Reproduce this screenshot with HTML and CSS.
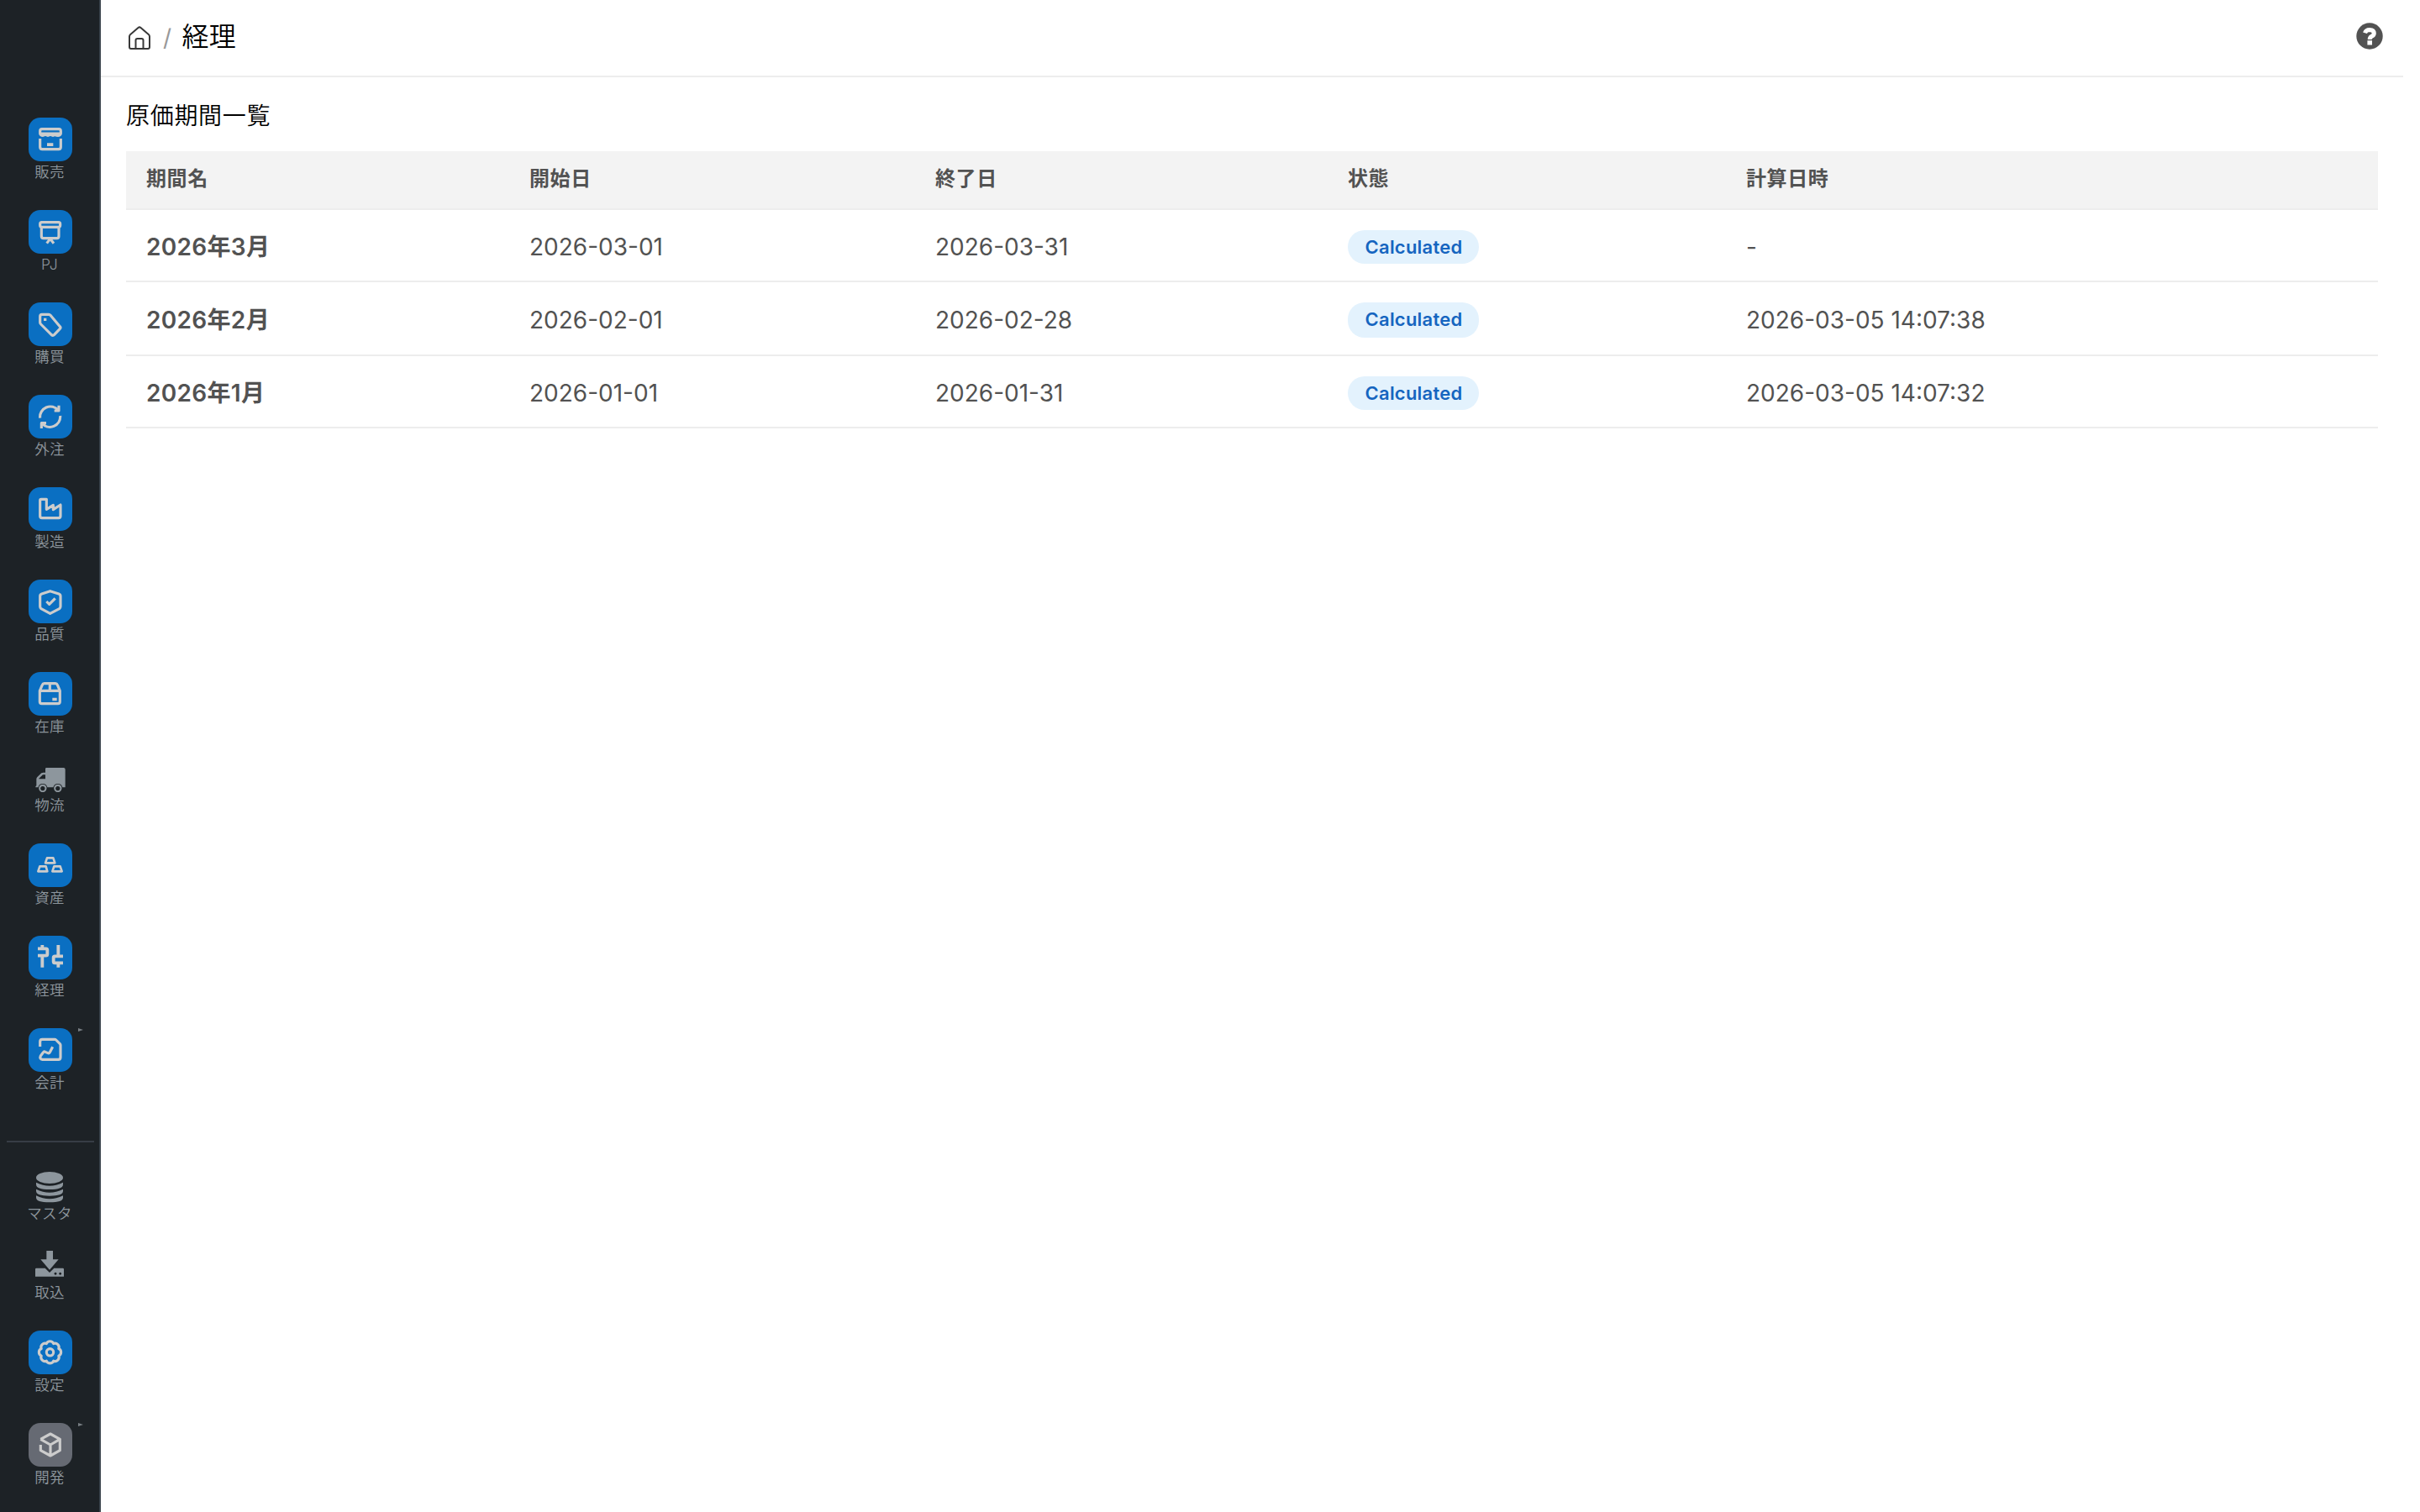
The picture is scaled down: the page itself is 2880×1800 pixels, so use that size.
FILE: index.html
```html
<!DOCTYPE html>
<html lang="ja">
<head>
<meta charset="utf-8">
<title>経理</title>
<link rel="stylesheet" href="styles.css">
</head>
<body>
<div class="app">
  <nav class="sidebar">
    <a class="item"><svg class="tile" viewBox="0 0 156 156"><path d="M41 57V48q0-7 7-7h60q7 0 7 7v9q-2 7-10 7t-9-4q-4 4-9 4t-9-4q-4 4-9 4t-9-4q-4 4-9 4-8 0-10-7ZM41 57H115M41 75V105q0 8 8 8h58q8 0 8-8V75"/><path class="solid" d="M66 91h22v11H66z"/></svg><span class="label">販売</span></a>
    <a class="item"><svg class="tile" viewBox="0 0 156 156"><rect x="41" y="44" width="72" height="17" rx="6"/><path d="M46 63V94q0 7 7 7h48q7 0 7-7V63M77 103L65 119M77 103L90 119"/></svg><span class="label">PJ</span></a>
    <a class="item"><svg class="tile" viewBox="0 0 156 156"><path d="M48 43H72q4 0 6 3L112 86q4 4 0 8L92 115q-5 5-10 1L44 78q-3-3-3-6V50q0-7 7-7Z"/><path class="solid" d="M54 56h10v10H54z"/></svg><span class="label">購買</span></a>
    <a class="item"><svg class="tile" viewBox="0 0 156 156"><path d="M41 83A37 37 0 0 1 106 55M108 38V57H92M113 75A37 37 0 0 1 48 102M46 120V101H63"/></svg><span class="label">外注</span></a>
    <a class="item"><svg class="tile" viewBox="0 0 156 156"><path d="M45 43H64V79L88 64V80L114 63V103q0 7-7 7H48q-7 0-7-7V47q0-4 4-4Z"/></svg><span class="label">製造</span></a>
    <a class="item"><svg class="tile" viewBox="0 0 156 156"><path d="M77 41L108 51q6 2 6 8V96q0 5-4 8L77 121L45 104q-4-3-4-8V59q0-6 6-8Z"/><path d="M64 78L74 88L95 67"/></svg><span class="label">品質</span></a>
    <a class="item"><svg class="tile" viewBox="0 0 156 156"><path d="M40 67L49 46q2-5 7-5H96q5 0 7 5L112 67V106q0 7-7 7H47q-7 0-7-7ZM40 67H112M76 41V67"/><path class="solid" d="M85 92h16v11H85z"/></svg><span class="label">在庫</span></a>
    <a class="item"><svg class="glyph truck" viewBox="0 0 108 90"><path fill-rule="evenodd" d="M40 0H101Q107 0 107 6V70H97A17 17 0 0 0 64 70H43A17 17 0 0 0 10 70H1Q0 66 4 64V40Q4 36 8 32L22 19Q25 17 29 17H36V4Q36 0 40 0ZM27 25L13 38V40H36V25Z"/><path fill-rule="evenodd" d="M26.500 59a14 14 0 1 0 .1 0ZM26.500 66a8 8 0 1 1-.1 0ZM80.500 59a14 14 0 1 0 .1 0ZM80.500 66a8 8 0 1 1-.1 0Z"/></svg><span class="label">物流</span></a>
    <a class="item"><svg class="tile thin" viewBox="0 0 156 156"><path d="M66 52H88L94 70H60ZM40 82H62L67 100H34ZM91 82H113L119 100H85Z"/></svg><span class="label">資産</span></a>
    <a class="item"><svg class="tile bold" viewBox="0 0 156 156"><path d="M49 33V46M33 46H62q5 0 5 5V66q0 5-5 5H33M49 71V113M106 33V73M123 73H94q-5 0-5 5V92q0 5 5 5H123M106 97V113"/></svg><span class="label">経理</span></a>
    <a class="item"><svg class="tile" viewBox="0 0 156 156"><path d="M41 66V48q0-8 8-8H93q3 0 5 2L112 56q2 2 2 5V104q0 8-8 8H50q-12-2-7-13L52 87q3-5 8-2l9 4q4 2 7-3L86 67"/></svg><span class="label">会計</span><i class="more"></i></a>
    <hr class="rule">
    <a class="item"><svg class="glyph" viewBox="0 0 108 108"><path d="M6 18a48 21 0 0 1 96 0a48 21 0 0 1-96 0ZM6 35q48 24 96 0v7q0 18-48 18T6 42ZM6 59q48 24 96 0v7q0 17-48 17T6 66ZM6 82q48 24 96 0v7q0 17-48 17T6 89Z"/></svg><span class="label">マスタ</span></a>
    <a class="item"><svg class="glyph" viewBox="0 0 108 108"><path fill-rule="evenodd" d="M43 -3H66V28H86L54 65L22 28H43ZM7 59H38L54 75L70 59H101Q105 59 105 63V89H3V63Q3 59 7 59ZM75 74a4.500 4.500 0 1 0 .1 0ZM92 74a4.500 4.500 0 1 0 .1 0Z"/></svg><span class="label">取込</span></a>
    <a class="item"><svg class="tile" viewBox="0 0 156 156"><circle cx="76.500" cy="77.500" r="12.500"/><path d="M63.700 46.500a14 14 0 0 1 25.600 0a14 14 0 0 1 18.200 18.200a14 14 0 0 1 0 25.600a14 14 0 0 1-18.200 18.200a14 14 0 0 1-25.600 0a14 14 0 0 1-18.200-18.200a14 14 0 0 1 0-25.600a14 14 0 0 1 18.200-18.200Z"/></svg><span class="label">設定</span></a>
    <a class="item"><svg class="tile gray" viewBox="0 0 156 156"><path d="M43 58L78 39L112 58V98L78 117L43 98V78M43 58L78 78L112 58M78 78V117"/></svg><span class="label">開発</span><i class="more"></i></a>
  </nav>
  <div class="page">
    <header class="topbar">
      <svg class="home" viewBox="0 0 28 30"><path d="M2 13.500Q2 12 3.200 11L12.500 3Q14 1.800 15.500 3L24.800 11Q26 12 26 13.500V26Q26 28 24 28H4Q2 28 2 26ZM9.500 28V18Q9.500 16 11.500 16H16.500Q18.500 16 18.500 18V28"/></svg>
      <span class="slash">/</span>
      <h1 class="crumb">経理</h1>
      <svg class="help" viewBox="0 0 32 32"><circle cx="16" cy="16" r="15.700"/><path class="hook" d="M10.500 12.200Q11.700 8.400 16 8.400Q21.200 8.600 21.300 12.600Q21.200 15 18.500 16.300Q16.200 17.500 16.200 20"/><rect x="13.400" y="21.200" width="5.600" height="5.300"/></svg>
    </header>
    <main class="content">
      <h2 class="title">原価期間一覧</h2>
      <div class="table">
        <div class="row head"><span>期間名</span><span>開始日</span><span>終了日</span><span>状態</span><span>計算日時</span></div>
        <div class="row"><b>2026年3月</b><span>2026-03-01</span><span>2026-03-31</span><span><em class="badge">Calculated</em></span><span>-</span></div>
        <div class="row tall"><b>2026年2月</b><span>2026-02-01</span><span>2026-02-28</span><span><em class="badge">Calculated</em></span><span>2026-03-05 14:07:38</span></div>
        <div class="row"><b>2026年1月</b><span>2026-01-01</span><span>2026-01-31</span><span><em class="badge">Calculated</em></span><span>2026-03-05 14:07:32</span></div>
      </div>
    </main>
  </div>
</div>
</body>
</html>
```
FILE: styles.css
```css
* { box-sizing: border-box; }
body { margin: 0; background: #fff; color: #171717; font-family: Inter, "Noto Sans CJK JP", sans-serif; letter-spacing: 0.02em; }
.app { display: flex; height: 1800px; }

.sidebar { width: 120px; flex: none; display: flex; flex-direction: column; padding-top: 140px; background: #1d2226; border-right: 2px solid #3a434b; }
.item { position: relative; display: flex; flex-direction: column; align-items: center; height: 110px; flex: none; }
.item:has(.glyph) { height: 94px; }
.tile { width: 52px; height: 52px; margin-left: 2px; border-radius: 14px; background: #0a6fc2; fill: none; stroke: #ccc; stroke-width: 9.500; stroke-linejoin: round; }
.tile .solid { fill: #ccc; stroke: none; }
.tile.thin { stroke-width: 8; }
.tile.bold { stroke-width: 11.500; }
.tile.gray { background: #666a73; }
.glyph { width: 36px; height: 36px; fill: #8d969d; overflow: visible; }
.truck { height: 30px; margin: 4px 0 2px 2px; }
.label { height: 26px; line-height: 26px; font-size: 17.500px; font-weight: 350; color: #8d969d; white-space: nowrap; }
.more { position: absolute; left: 93px; top: 0; border-left: 6px solid #777d82; border-top: 2.500px solid transparent; border-bottom: 2.500px solid transparent; }
.rule { width: 104px; height: 2px; margin: 24px 0 36px 8px; border: 0; flex: none; background: #373d45; }

.page { width: 2740px; }
.topbar { display: flex; align-items: center; height: 92px; padding: 0 24px 4px 32px; border-bottom: 2px solid #ededed; }
.home { width: 28px; height: 30px; margin-top: 4px; fill: none; stroke: #383838; stroke-width: 2; stroke-linejoin: round; }
.slash { margin: 4px 0 0 14px; font-size: 28px; color: #999; }
.crumb { margin: 0 0 4px 12px; font-size: 32px; font-weight: 350; color: #000; }
.help { width: 32px; height: 32px; margin-left: auto; fill: #525252; }
.help .hook { fill: none; stroke: #fff; stroke-width: 5; }
.help rect { fill: #fff; }

.content { padding: 26px 30px; }
.title { margin: 0 0 22px; font-size: 28px; line-height: 40px; font-weight: 350; letter-spacing: 0.025em; color: #000; }
.table { width: 2680px; color: #525252; font-size: 28px; }
.row { display: grid; grid-template-columns: 456px 483px 491px 474px 1fr; align-items: center; height: 86px; border-bottom: 2px solid #ededed; }
.row > * { padding-left: 24px; }
.row > span { padding-top: 4px; letter-spacing: 0; }
.row.tall { height: 88px; }
.row.head { height: 70px; background: #f3f3f3; font-size: 24px; font-weight: 700; }
.row.head > span { padding: 0 0 7px 24px; letter-spacing: 0.025em; }
.row b { font-weight: 600; }
.badge { display: block; width: 156px; height: 40px; padding-left: 1px; border-radius: 20px; background: #e3f2fd; color: #1565c0; font-size: 22px; line-height: 40px; font-style: normal; font-weight: 600; letter-spacing: 0.01em; text-align: center; }
.tall .badge { height: 42px; }
```
